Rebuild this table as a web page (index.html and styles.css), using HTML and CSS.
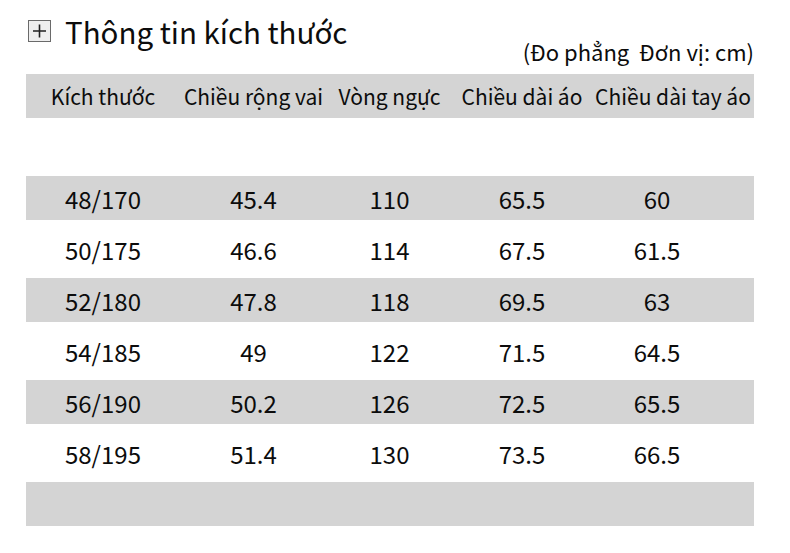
FILE: index.html
```html
<!DOCTYPE html>
<html lang="vi">
<head>
<meta charset="utf-8">
<link rel="stylesheet" href="styles.css">
</head>
<body>
<div class="page">
  <div class="title-row">
    <span class="plus-box"><svg width="23" height="22" viewBox="0 0 23 22"><rect x="0.5" y="0.5" width="22" height="21" fill="#efefef" stroke="#6a6a6a"/><path d="M5 11H18M11.5 4.5V17.5" stroke="#222" stroke-width="1.6"/></svg></span>
    <h1 class="title">Thông tin kích thước</h1>
  </div>
  <div class="unit">(Đo phẳng&nbsp; Đơn vị: cm)</div>
  <div class="table">
    <div class="row head"><span>Kích thước</span><span>Chiều rộng vai</span><span>Vòng ngực</span><span>Chiều dài áo</span><span>Chiều dài tay áo</span></div>
    <div class="spacer"></div>
    <div class="row grey"><span>48/170</span><span>45.4</span><span>110</span><span>65.5</span><span class="last">60</span></div>
    <div class="row"><span>50/175</span><span>46.6</span><span>114</span><span>67.5</span><span class="last">61.5</span></div>
    <div class="row grey"><span>52/180</span><span>47.8</span><span>118</span><span>69.5</span><span class="last">63</span></div>
    <div class="row"><span>54/185</span><span>49</span><span>122</span><span>71.5</span><span class="last">64.5</span></div>
    <div class="row grey"><span>56/190</span><span>50.2</span><span>126</span><span>72.5</span><span class="last">65.5</span></div>
    <div class="row"><span>58/195</span><span>51.4</span><span>130</span><span>73.5</span><span class="last">66.5</span></div>
    <div class="row grey"></div>
  </div>
</div>
</body>
</html>
```
FILE: styles.css
```css
* { box-sizing: border-box; }
html, body { margin: 0; padding: 0; background: #ffffff; }
body {
  font-family: "Noto Sans CJK SC", "Noto Sans", sans-serif;
  color: #0c0c0c;
  width: 790px;
  height: 553px;
  overflow: hidden;
}
.page { padding: 15px 36px 0 26px; }
.title-row {
  display: flex;
  align-items: center;
  gap: 14px;
  padding-left: 2px;
  height: 32px;
}
.plus-box { display: flex; }
.title {
  margin: 0;
  font-size: 29.5px;
  font-weight: 400;
  line-height: 32px;
}
.unit {
  text-align: right;
  font-size: 22px;
  line-height: 24px;
  margin-top: -8px;
  margin-bottom: 11px;
  height: 24px;
}
.table { display: flex; flex-direction: column; gap: 7px; }
.row {
  display: grid;
  grid-template-columns: 154px 147px 125px 140px 162px;
  height: 44px;
  align-items: center;
  text-align: center;
  font-size: 24px;
}
.row.head { background: #d4d4d4; font-size: 21px; }
.row.grey { background: #d4d4d4; }
.spacer { height: 44px; }
.last { padding-right: 32px; }
```
